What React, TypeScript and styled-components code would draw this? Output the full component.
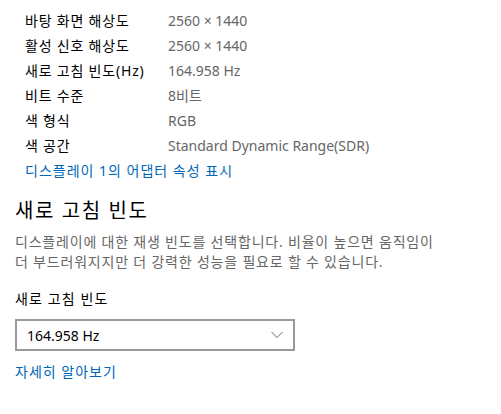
import styled, { createGlobalStyle } from "styled-components";

const GlobalStyle = createGlobalStyle`
    html, body {
        margin: 0;
        padding: 0;
        background: #ffffff;
    }
    body {
        font-family: "Noto Sans", "Noto Sans CJK KR", sans-serif;
        font-size: 14px;
        color: #000;
    }
`

const Page = styled.div`
    width: 501px;
    height: 414px;
    padding: 8px 15px 0 15px;
    box-sizing: border-box;
    overflow: hidden;
`

const Specs = styled.div`
    display: grid;
    grid-template-columns: 143px 1fr;
    padding-left: 10px;
`

const SpecLabel = styled.div`
    line-height: 25px;
    color: #000;
    white-space: nowrap;
    letter-spacing: 0.8px;
`

const SpecValue = styled.div`
    line-height: 25px;
    color: #666;
    white-space: nowrap;
`

const Link = styled.a<{ $indent?: boolean; $gap?: number }>`
    display: block;
    margin-top: ${p => p.$gap ?? 0}px;
    line-height: 25px;
    color: #0067b8;
    text-decoration: none;
    letter-spacing: 1px;
    cursor: pointer;
    padding-left: ${p => p.$indent ? "10px" : "0"};
`

const Heading = styled.h2`
    margin: 14px 0 0;
    font-size: 20px;
    font-weight: 400;
    line-height: 28px;
    letter-spacing: 1.6px;
`

const Description = styled.p`
    margin: 7px 0 0;
    line-height: 20px;
    color: #666;
    letter-spacing: 0.8px;
`

const FieldLabel = styled.div`
    margin-top: 17px;
    line-height: 20px;
    letter-spacing: 1.1px;
`

const Select = styled.div`
    margin-top: 10px;
    width: 280px;
    height: 32px;
    box-sizing: border-box;
    border: 2px solid #999;
    display: flex;
    align-items: center;
    justify-content: space-between;
    padding: 0 10px 0 10px;
`

const Chevron = styled.svg`
    width: 12px;
    height: 8px;
`

const specs: [string, string][] = [
    ["바탕 화면 해상도", "2560 × 1440"],
    ["활성 신호 해상도", "2560 × 1440"],
    ["새로 고침 빈도(Hz)", "164.958 Hz"],
    ["비트 수준", "8비트"],
    ["색 형식", "RGB"],
    ["색 공간", "Standard Dynamic Range(SDR)"],
]

export default function App() {
    return (
        <Page>
            <GlobalStyle/>
            <Specs>
                {specs.flatMap(([k, v]) => [
                    <SpecLabel key={k}>{k}</SpecLabel>,
                    <SpecValue key={k + "v"}>{v}</SpecValue>,
                ])}
            </Specs>
            <Link $indent>디스플레이 1의 어댑터 속성 표시</Link>
            <Heading>새로 고침 빈도</Heading>
            <Description>
                디스플레이에 대한 재생 빈도를 선택합니다. 비율이 높으면 움직임이<br/>
                더 부드러워지지만 더 강력한 성능을 필요로 할 수 있습니다.
            </Description>
            <FieldLabel>새로 고침 빈도</FieldLabel>
            <Select>
                <span>164.958 Hz</span>
                <Chevron viewBox="0 0 12 8">
                    <path d="M0.5 1 L6 6.5 L11.5 1" fill="none" stroke="#666" strokeWidth="1"/>
                </Chevron>
            </Select>
            <Link $gap={8}>자세히 알아보기</Link>
        </Page>
    )
}
